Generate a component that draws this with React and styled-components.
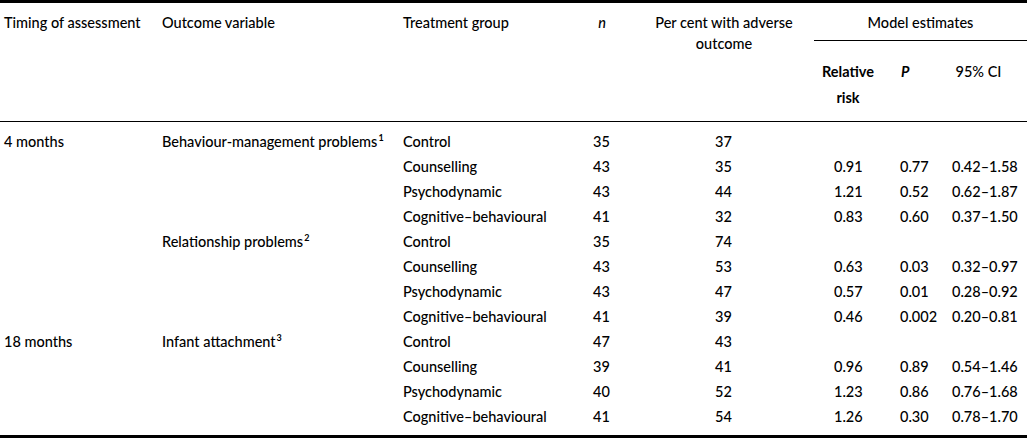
import React from 'react'
import styled, { createGlobalStyle } from 'styled-components'

const GlobalStyle = createGlobalStyle`
  body {
    margin: 0;
    background: #fff;
    color: #000;
    font-family: Lato, 'Open Sans', 'Liberation Sans', sans-serif;
    font-size: 14.5px;
    font-weight: 500;
  }
`

const rows = [
  { time: '4 months', outcome: 'Behaviour-management problems', sup: '1', group: 'Control', n: 35, pct: 37 },
  { group: 'Counselling', n: 43, pct: 35, rr: '0.91', p: '0.77', ci: '0.42–1.58' },
  { group: 'Psychodynamic', n: 43, pct: 44, rr: '1.21', p: '0.52', ci: '0.62–1.87' },
  { group: 'Cognitive–behavioural', n: 41, pct: 32, rr: '0.83', p: '0.60', ci: '0.37–1.50' },
  { outcome: 'Relationship problems', sup: '2', group: 'Control', n: 35, pct: 74 },
  { group: 'Counselling', n: 43, pct: 53, rr: '0.63', p: '0.03', ci: '0.32–0.97' },
  { group: 'Psychodynamic', n: 43, pct: 47, rr: '0.57', p: '0.01', ci: '0.28–0.92' },
  { group: 'Cognitive–behavioural', n: 41, pct: 39, rr: '0.46', p: '0.002', ci: '0.20–0.81' },
  { time: '18 months', outcome: 'Infant attachment', sup: '3', group: 'Control', n: 47, pct: 43 },
  { group: 'Counselling', n: 39, pct: 41, rr: '0.96', p: '0.89', ci: '0.54–1.46' },
  { group: 'Psychodynamic', n: 40, pct: 52, rr: '1.23', p: '0.86', ci: '0.76–1.68' },
  { group: 'Cognitive–behavioural', n: 41, pct: 54, rr: '1.26', p: '0.30', ci: '0.78–1.70' },
]

export default function App() {
  return (
    <>
      <GlobalStyle />
      <Table>
        <colgroup>
          <col style={{ width: 162 }} />
          <col style={{ width: 241 }} />
          <col style={{ width: 167 }} />
          <col style={{ width: 64 }} />
          <col style={{ width: 180 }} />
          <col style={{ width: 68 }} />
          <col style={{ width: 48 }} />
          <col style={{ width: 97 }} />
        </colgroup>
        <thead>
          <tr>
            <HeadCell rowSpan={2} $padLeft={4}>Timing of assessment</HeadCell>
            <HeadCell rowSpan={2}>Outcome variable</HeadCell>
            <HeadCell rowSpan={2}>Treatment group</HeadCell>
            <HeadCell rowSpan={2} $align="center"><em>n</em></HeadCell>
            <HeadCell rowSpan={2} $align="center">
              Per cent with adverse
              <br />
              outcome
            </HeadCell>
            <GroupCell colSpan={3}>Model estimates</GroupCell>
          </tr>
          <tr>
            <SubCell $align="center"><strong>Relative<br />risk</strong></SubCell>
            <SubCell $padLeft={19}><PLabel>P</PLabel></SubCell>
            <SubCell $align="center">95% CI</SubCell>
          </tr>
        </thead>
        <tbody>
          {rows.map((r, i) => (
            <Row key={i} $first={i === 0} $last={i === rows.length - 1}>
              <Cell $padLeft={4}>{r.time}</Cell>
              <Cell>
                {r.outcome && (
                  <>
                    {r.outcome}
                    <Sup>{r.sup}</Sup>
                  </>
                )}
              </Cell>
              <Cell>{r.group}</Cell>
              <Cell $align="center">{r.n}</Cell>
              <Cell $align="center">{r.pct}</Cell>
              <Cell $padLeft={20}>{r.rr}</Cell>
              <Cell $padLeft={18}>{r.p}</Cell>
              <Cell $padLeft={22}>{r.ci}</Cell>
            </Row>
          ))}
        </tbody>
      </Table>
    </>
  )
}

const Table = styled.table`
  width: 1027px;
  table-layout: fixed;
  border-collapse: separate;
  border-spacing: 0;
  border-top: 3px solid #000;
  border-bottom: 4px solid #000;
`

const HeadCell = styled.th`
  vertical-align: top;
  text-align: ${p => p.$align || 'left'};
  font-weight: 500;
  line-height: 21px;
  padding: 9px 0 0 ${p => p.$padLeft || 0}px;
  border-bottom: 1px solid #000;
  white-space: nowrap;
  em {
    font-style: italic;
  }
`

const GroupCell = styled.th`
  font-weight: 500;
  text-align: center;
  line-height: 21px;
  padding: 9px 0 7px;
  border-bottom: 1px solid #000;
`

const SubCell = styled.th`
  vertical-align: top;
  text-align: ${p => p.$align || 'left'};
  font-weight: 500;
  line-height: 26px;
  padding: 18px 0 10px ${p => p.$padLeft || 0}px;
  border-bottom: 1px solid #000;
  white-space: nowrap;
`

const PLabel = styled.span`
  font-weight: bold;
  font-style: italic;
`

const Row = styled.tr`
  td {
    padding-top: ${p => (p.$first ? 7 : 0)}px;
    padding-bottom: ${p => (p.$last ? 6 : 0)}px;
  }
`

const Cell = styled.td`
  text-align: ${p => p.$align || 'left'};
  line-height: 25px;
  padding-left: ${p => p.$padLeft || 0}px;
  white-space: nowrap;
  vertical-align: top;
`

const Sup = styled.sup`
  font-size: 9px;
  line-height: 0;
  font-weight: bold;
  margin-left: 1px;
`
